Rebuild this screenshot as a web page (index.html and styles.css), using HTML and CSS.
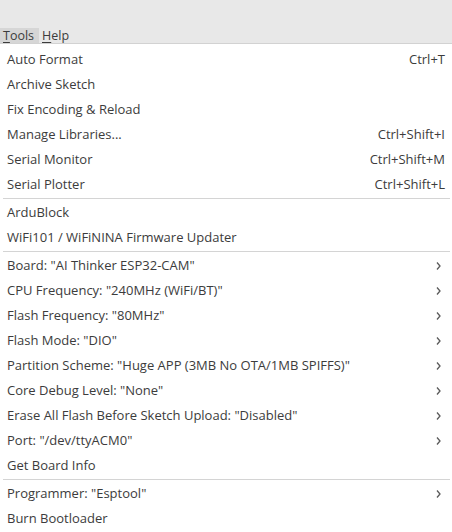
FILE: index.html
```html
<!DOCTYPE html>
<html>
<head>
<meta charset="utf-8">
<link rel="stylesheet" href="styles.css">
</head>
<body>
<div class="app">
  <div class="menubar">
    <span class="mb-item active"><u>T</u>ools</span><span class="mb-item"><u>H</u>elp</span>
  </div>
  <div class="menu">
    <div class="row"><span class="label">Auto Format</span><span class="accel">Ctrl+T</span></div>
    <div class="row"><span class="label">Archive Sketch</span></div>
    <div class="row"><span class="label">Fix Encoding &amp; Reload</span></div>
    <div class="row"><span class="label">Manage Libraries...</span><span class="accel">Ctrl+Shift+I</span></div>
    <div class="row"><span class="label">Serial Monitor</span><span class="accel">Ctrl+Shift+M</span></div>
    <div class="row"><span class="label">Serial Plotter</span><span class="accel">Ctrl+Shift+L</span></div>
    <div class="sep"></div>
    <div class="row"><span class="label">ArduBlock</span></div>
    <div class="row"><span class="label">WiFi101 / WiFiNINA Firmware Updater</span></div>
    <div class="sep"></div>
    <div class="row"><span class="label">Board: "AI Thinker ESP32-CAM"</span><span class="arrow"><svg width="5" height="8" viewBox="0 0 5 8"><path d="M1 0.5 L4 4 L1 7.5" fill="none" stroke="#5a5a5a" stroke-width="1.3"/></svg></span></div>
    <div class="row"><span class="label">CPU Frequency: "240MHz (WiFi/BT)"</span><span class="arrow"><svg width="5" height="8" viewBox="0 0 5 8"><path d="M1 0.5 L4 4 L1 7.5" fill="none" stroke="#5a5a5a" stroke-width="1.3"/></svg></span></div>
    <div class="row"><span class="label">Flash Frequency: "80MHz"</span><span class="arrow"><svg width="5" height="8" viewBox="0 0 5 8"><path d="M1 0.5 L4 4 L1 7.5" fill="none" stroke="#5a5a5a" stroke-width="1.3"/></svg></span></div>
    <div class="row"><span class="label">Flash Mode: "DIO"</span><span class="arrow"><svg width="5" height="8" viewBox="0 0 5 8"><path d="M1 0.5 L4 4 L1 7.5" fill="none" stroke="#5a5a5a" stroke-width="1.3"/></svg></span></div>
    <div class="row"><span class="label">Partition Scheme: "Huge APP (3MB No OTA/1MB SPIFFS)"</span><span class="arrow"><svg width="5" height="8" viewBox="0 0 5 8"><path d="M1 0.5 L4 4 L1 7.5" fill="none" stroke="#5a5a5a" stroke-width="1.3"/></svg></span></div>
    <div class="row"><span class="label">Core Debug Level: "None"</span><span class="arrow"><svg width="5" height="8" viewBox="0 0 5 8"><path d="M1 0.5 L4 4 L1 7.5" fill="none" stroke="#5a5a5a" stroke-width="1.3"/></svg></span></div>
    <div class="row"><span class="label">Erase All Flash Before Sketch Upload: "Disabled"</span><span class="arrow"><svg width="5" height="8" viewBox="0 0 5 8"><path d="M1 0.5 L4 4 L1 7.5" fill="none" stroke="#5a5a5a" stroke-width="1.3"/></svg></span></div>
    <div class="row"><span class="label">Port: "/dev/ttyACM0"</span><span class="arrow"><svg width="5" height="8" viewBox="0 0 5 8"><path d="M1 0.5 L4 4 L1 7.5" fill="none" stroke="#5a5a5a" stroke-width="1.3"/></svg></span></div>
    <div class="row"><span class="label">Get Board Info</span></div>
    <div class="sep"></div>
    <div class="row"><span class="label">Programmer: "Esptool"</span><span class="arrow"><svg width="5" height="8" viewBox="0 0 5 8"><path d="M1 0.5 L4 4 L1 7.5" fill="none" stroke="#5a5a5a" stroke-width="1.3"/></svg></span></div>
    <div class="row"><span class="label">Burn Bootloader</span></div>
  </div>
</div>
</body>
</html>
```
FILE: styles.css
```css
html, body {
  margin: 0;
  padding: 0;
  background: #ffffff;
}
.app {
  width: 452px;
  height: 532px;
  overflow: hidden;
  font-family: "Open Sans", "Noto Sans", "DejaVu Sans", sans-serif;
  font-size: 13px;
  color: #3c3c3c;
}
.menubar {
  height: 43px;
  background: #e8e8e8;
  border-bottom: 1px solid #d2d2d2;
  display: flex;
  align-items: flex-end;
  font-size: 12.5px;
}
.mb-item {
  height: 15px;
  line-height: 15px;
  padding: 0 3px;
  display: flex;
  align-items: center;
}
.mb-item.active {
  background: #d6d6d6;
  width: 33px;
}
.mb-item u {
  text-decoration-thickness: 1px;
  text-underline-offset: 2px;
}
.menu {
  padding-top: 3px;
  background: #ffffff;
}
.row {
  box-sizing: border-box;
  height: 25px;
  display: flex;
  align-items: center;
  padding: 0 11px 2px 7px;
}
.label {
  flex: 1;
  white-space: nowrap;
}
.accel {
  white-space: nowrap;
  margin-right: -4px;
}
.arrow {
  display: flex;
  align-items: center;
  padding-top: 2px;
}
.sep {
  height: 1px;
  margin: 1px 2px 1px 3px;
  background: #d4d4d4;
}
```
